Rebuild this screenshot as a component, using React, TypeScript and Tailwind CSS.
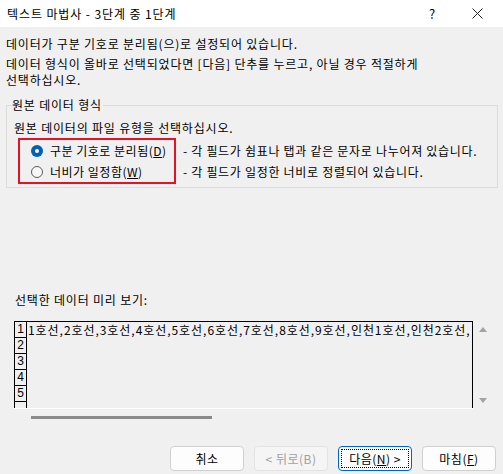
const FONT = { fontFamily: '"Noto Sans CJK KR", "Noto Sans", sans-serif' };

const rows = ["1호선,2호선,3호선,4호선,5호선,6호선,7호선,8호선,9호선,인천1호선,인천2호선,", "", "", "", "", ""];

function Radio({ checked }: { checked?: boolean }) {
  return checked ? (
    <span className="flex h-[12px] w-[12px] items-center justify-center rounded-full bg-[#005fb8]">
      <span className="h-[4px] w-[4px] rounded-full bg-white" />
    </span>
  ) : (
    <span className="h-[12px] w-[12px] rounded-full border border-[#5a5a5a] bg-[#f7f7f7]" />
  );
}

function Btn({ children, primary, disabled }: { children: React.ReactNode; primary?: boolean; disabled?: boolean }) {
  const base = "flex h-[25px] w-[74px] items-center justify-center rounded-[4px] border text-[12px]";
  if (primary)
    return (
      <div className={`${base} border-[#0067c0] bg-[#fdfdfd] p-[2px] text-black`}>
        <div className="flex h-full w-full items-center justify-center border border-dotted border-black">{children}</div>
      </div>
    );
  return (
    <div className={`${base} ${disabled ? "border-[#e3e3e3] bg-[#f5f5f5] text-[#a0a0a0]" : "border-[#d0d0d0] bg-[#fdfdfd] text-black"}`}>
      {children}
    </div>
  );
}

export default function App() {
  return (
    <div className="h-[474px] w-[503px] overflow-hidden bg-[#f0f0f0] text-[12px] leading-[16px] tracking-[0.8px] text-black" style={FONT}>
      {/* Title bar */}
      <div className="flex h-[27px] items-center bg-white pl-[7px]">
        <span className="text-[12px] tracking-[0.9px]">텍스트 마법사 - 3단계 중 1단계</span>
        <span className="ml-auto mr-[36px] text-[13px]">?</span>
        <svg width="11" height="11" viewBox="0 0 11 11" className="mr-[20px]">
          <path d="M0.5 0.5 L10.5 10.5 M10.5 0.5 L0.5 10.5" stroke="#222" strokeWidth="1" />
        </svg>
      </div>

      <div className="pl-[6px] pt-[9px]">
        <p>데이터가 구분 기호로 분리됨(으)로 설정되어 있습니다.</p>
        <p className="mt-[4px]">
          데이터 형식이 올바로 선택되었다면 [다음] 단추를 누르고, 아닐 경우 적절하게
          <br />
          선택하십시오.
        </p>
      </div>

      {/* Group box */}
      <fieldset className="ml-[6px] mt-[9px] w-[492px] border border-[#dcdcdc] pb-[3px]">
        <legend className="ml-[4px] px-[1px]">원본 데이터 형식</legend>
        <p className="ml-[7px] mt-[7px]">원본 데이터의 파일 유형을 선택하십시오.</p>
        <div className="mt-[2px] flex">
          <div className="ml-[11px] w-[158px] shrink-0 border-2 border-[#e81123]">
            <div className="flex h-[21px] items-center pl-[11px]">
              <Radio checked />
              <span className="ml-[7px] tracking-[0.5px]">
                구분 기호로 분리됨(<span className="underline">D</span>)
              </span>
            </div>
            <div className="flex h-[21px] items-center pl-[11px]">
              <Radio />
              <span className="ml-[7px] tracking-[0.5px]">
                너비가 일정함(<span className="underline">W</span>)
              </span>
            </div>
          </div>
          <div className="ml-[7px] whitespace-nowrap pt-[2px] tracking-[0.7px]">
            <div className="flex h-[21px] items-center">- 각 필드가 쉼표나 탭과 같은 문자로 나누어져 있습니다.</div>
            <div className="flex h-[21px] items-center">- 각 필드가 일정한 너비로 정렬되어 있습니다.</div>
          </div>
        </div>
      </fieldset>

      <p className="ml-[15px] mt-[104px]">선택한 데이터 미리 보기:</p>

      {/* Preview */}
      <div className="ml-[14px] mt-[13px] flex w-[478px]">
        <div className="w-[459px]">
          <div className="h-[87px] overflow-hidden border-l border-r border-t border-black">
            {rows.map((r, i) => (
              <div key={i} className="flex h-[16px]">
                <div
                  className="w-[12px] shrink-0 border-b border-r border-black text-center text-[12px] leading-[15px] tracking-normal"
                  style={{ fontFamily: '"Liberation Sans Narrow", "Liberation Sans", sans-serif' }}
                >
                  {i < 5 ? i + 1 : ""}
                </div>
                <div className="whitespace-nowrap pl-[1px] text-[12px] leading-[15px] tracking-[0.95px]">{r}</div>
              </div>
            ))}
          </div>
          <div className="h-px bg-white" />
          <div className="ml-[17px] mt-[7px] h-[3px] w-[181px] bg-[#8a8a8a]" />
        </div>
        <div className="flex h-[87px] w-[19px] flex-col items-center justify-between pb-[5px] pt-[6px]">
          <svg width="8" height="5" viewBox="0 0 8 5">
            <path d="M4 0 L8 5 L0 5 Z" fill="#a3a3a3" />
          </svg>
          <svg width="8" height="5" viewBox="0 0 8 5">
            <path d="M0 0 L8 0 L4 5 Z" fill="#a3a3a3" />
          </svg>
        </div>
      </div>

      {/* Buttons */}
      <div className="mt-[27px] flex justify-end gap-[10px] pr-[7px] tracking-[0.5px]">
        <Btn>취소</Btn>
        <Btn disabled>&lt; 뒤로(B)</Btn>
        <Btn primary>
          다음(<span className="underline">N</span>) &gt;
        </Btn>
        <Btn>
          마침(<span className="underline">F</span>)
        </Btn>
      </div>
    </div>
  );
}
